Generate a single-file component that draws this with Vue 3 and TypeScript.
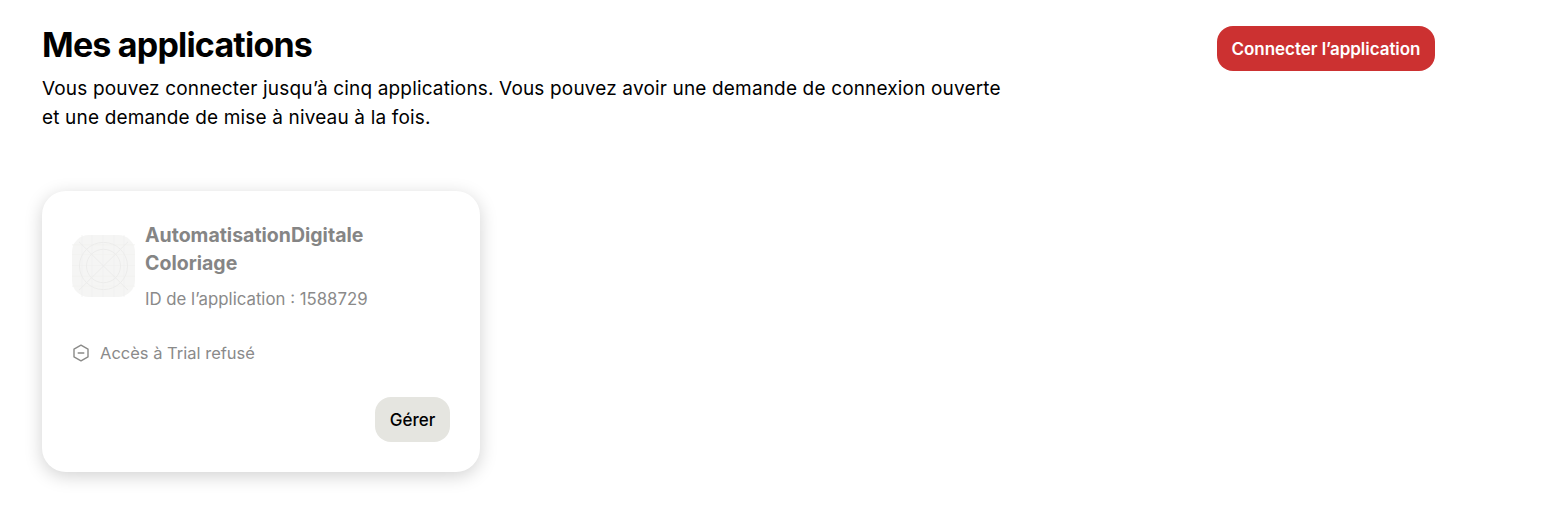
<script setup lang="ts">
const gridLines: number[] = [10, 20, 31, 42, 52];
</script>

<template>
  <main class="page">
    <header class="head">
      <div class="intro">
        <h1 class="title">Mes applications</h1>
        <p class="lead">Vous pouvez connecter jusqu’à cinq applications. Vous pouvez avoir une demande de connexion ouverte et une demande de mise à niveau à la fois.</p>
      </div>
      <button class="btn btn-red" type="button">Connecter l’application</button>
    </header>

    <section class="card">
      <div class="app">
        <svg class="logo" viewBox="0 0 63 63" width="63" height="62" preserveAspectRatio="none" aria-hidden="true">
          <rect width="63" height="63" rx="17" fill="#f5f5f4" />
          <g stroke="#f0f0ef" stroke-width="0.7" fill="none">
            <line v-for="p in gridLines" :key="'v' + p" :x1="p" y1="0" :x2="p" y2="63" />
            <line v-for="p in gridLines" :key="'h' + p" x1="0" :y1="p" x2="63" :y2="p" />
          </g>
          <g stroke="#ececeb" stroke-width="1" fill="none">
            <circle cx="31.5" cy="31.5" r="24" />
            <circle cx="31.5" cy="31.5" r="17" />
            <line x1="7" y1="7" x2="56" y2="56" />
            <line x1="56" y1="7" x2="7" y2="56" />
          </g>
        </svg>
        <div class="meta">
          <div class="name">AutomatisationDigitale Coloriage</div>
          <div class="app-id">ID de l’application : 1588729</div>
        </div>
      </div>

      <div class="status">
        <svg class="status-icon" viewBox="0 0 18 18" width="18" height="18" aria-hidden="true">
          <path d="M9 1.2 16 5.1V12.9L9 16.8 2 12.9V5.1Z" fill="none" stroke="#8a8a88" stroke-width="1.4" stroke-linejoin="round" />
          <line x1="6.2" y1="9" x2="11.8" y2="9" stroke="#8a8a88" stroke-width="1.4" stroke-linecap="round" />
        </svg>
        <span>Accès à Trial refusé</span>
      </div>

      <div class="actions">
        <button class="btn btn-grey" type="button">Gérer</button>
      </div>
    </section>
  </main>
</template>

<style>
html, body { margin: 0; background: #fff; }
</style>

<style scoped>
.page {
  box-sizing: border-box;
  min-height: 515px;
  padding: 26px 115px 0 42px;
  font-family: Inter, "Liberation Sans", sans-serif;
  color: #000;
}
.head {
  display: flex;
  justify-content: space-between;
  align-items: flex-start;
}
.intro { width: 975px; }
.title {
  margin: 0;
  font-size: 34px;
  line-height: 38px;
  font-weight: 700;
  letter-spacing: -0.8px;
}
.lead {
  margin: 10px 0 0;
  font-size: 19px;
  line-height: 29px;
  font-weight: 400;
  letter-spacing: 0.16px;
}
.btn {
  border: 0;
  font-family: inherit;
  font-size: 17px;
  font-weight: 600;
  height: 45px;
  border-radius: 16px;
  padding: 0 15px;
}
.btn-red { background: #cc3131; color: #fff; letter-spacing: -0.05px; width: 218px; padding: 0; }
.btn-grey { background: #e5e5e0; color: #000; font-weight: 500; width: 75px; padding: 0; }
.card {
  margin-top: 59px;
  width: 438px;
  height: 281px;
  box-sizing: border-box;
  padding: 30px;
  border-radius: 24px;
  background: #fff;
  box-shadow: 0 4px 18px rgba(0, 0, 0, 0.18);
  display: flex;
  flex-direction: column;
}
.app {
  display: flex;
  align-items: center;
  gap: 10px;
}
.logo { flex: none; margin-top: 1px; }
.meta { width: 265px; }
.name {
  font-size: 19.5px;
  line-height: 28px;
  font-weight: 700;
  color: #858585;
}
.app-id {
  margin-top: 11px;
  font-size: 16.8px;
  line-height: 22px;
  color: #8a8a8a;
}
.status {
  display: flex;
  align-items: center;
  gap: 10px;
  margin-top: 32px;
  font-size: 16.5px;
  line-height: 22px;
  color: #8a8a8a;
}
.actions {
  margin-top: auto;
  display: flex;
  justify-content: flex-end;
}
</style>
